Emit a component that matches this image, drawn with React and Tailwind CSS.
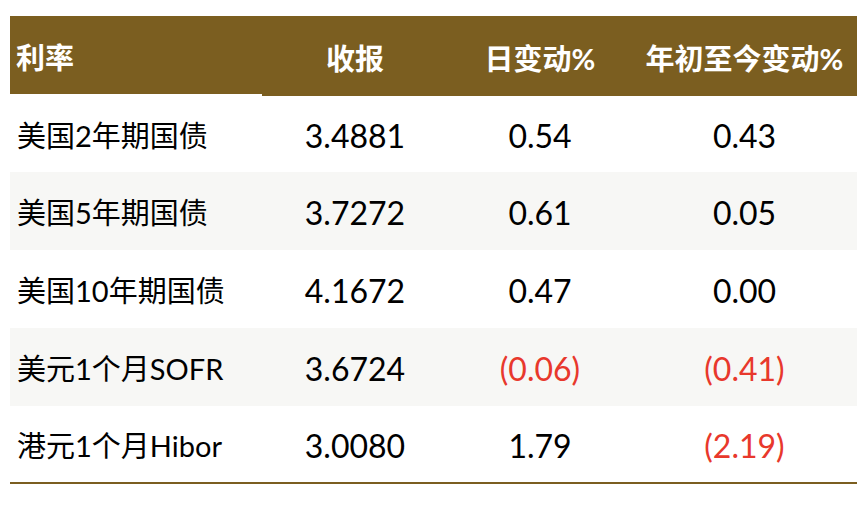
const rows = [
  { name: "美国2年期国债", close: "3.4881", day: "0.54", ytd: "0.43" },
  { name: "美国5年期国债", close: "3.7272", day: "0.61", ytd: "0.05" },
  { name: "美国10年期国债", close: "4.1672", day: "0.47", ytd: "0.00" },
  { name: "美元1个月SOFR", close: "3.6724", day: "(0.06)", ytd: "(0.41)" },
  { name: "港元1个月Hibor", close: "3.0080", day: "1.79", ytd: "(2.19)" },
];

const neg = (v) => (v.startsWith("(") ? "text-[#e8382c]" : "text-black");

export default function App() {
  return (
    <div
      className="h-[508px] w-[864px] bg-white pl-[10px] pr-[7px] pt-4"
      style={{ fontFamily: 'Lato, "Noto Sans CJK SC", sans-serif' }}
    >
      <div className="grid grid-cols-[252px_186px_184px_225px] border-b-2 border-[#7b5e20]">
        <div className="flex h-[78px] items-center bg-[#7b5e20] pl-[6px] pt-[6px] text-[29px] font-bold text-white">
          利率
        </div>
        <div className="flex h-[80px] items-center justify-center bg-[#7b5e20] pt-[6px] text-[29px] font-bold text-white">
          收报
        </div>
        <div className="flex h-[80px] items-center justify-center bg-[#7b5e20] pt-[6px] text-[29px] font-bold text-white">
          日变动%
        </div>
        <div className="flex h-[80px] items-center justify-center bg-[#7b5e20] pt-[6px] text-[29px] font-bold text-white">
          年初至今变动%
        </div>
        {rows.map((r, i) => {
          const bg = i % 2 === 1 ? "bg-[#f7f7f5]" : "bg-white";
          const h = i === 0 || i === 4 ? "h-[76px]" : "h-[78px]";
          return (
            <div key={r.name} className="contents">
              <div className={`flex ${h} items-center pl-[7px] pt-1 text-[29px] text-black ${bg}`}>
                {r.name}
              </div>
              <div className={`flex ${h} items-center justify-center pt-1 text-[32px] text-black ${bg}`}>
                {r.close}
              </div>
              <div className={`flex ${h} items-center justify-center pt-1 text-[32px] ${neg(r.day)} ${bg}`}>
                {r.day}
              </div>
              <div className={`flex ${h} items-center justify-center pt-1 text-[32px] ${neg(r.ytd)} ${bg}`}>
                {r.ytd}
              </div>
            </div>
          );
        })}
      </div>
    </div>
  );
}
